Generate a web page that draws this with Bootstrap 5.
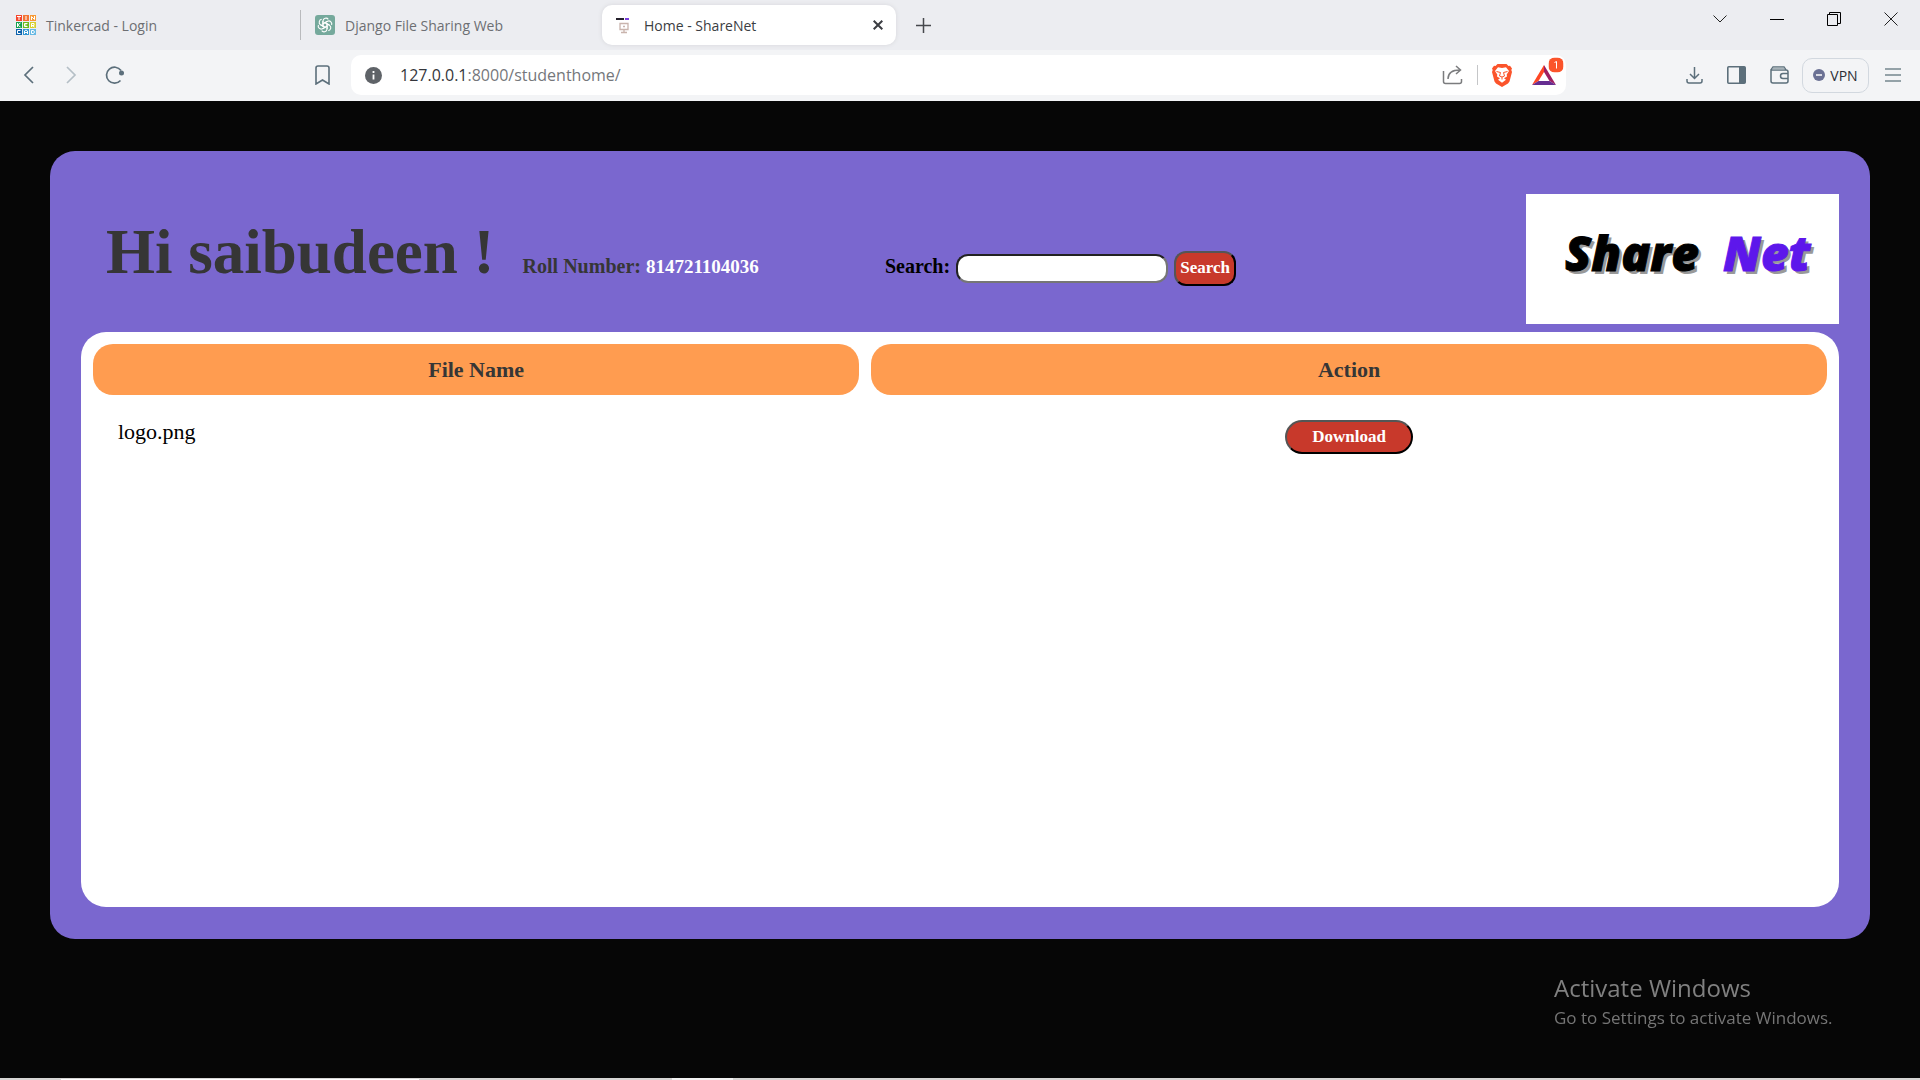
<!DOCTYPE html>
<html lang="en">
<head>
<meta charset="utf-8">
<meta name="viewport" content="width=device-width, initial-scale=1">
<title>Home - ShareNet</title>
<link href="https://cdn.jsdelivr.net/npm/bootstrap@5.3.0/dist/css/bootstrap.min.css" rel="stylesheet">
<style>
  body { font-family: "Open Sans", "Noto Sans", sans-serif; background: #060606; }
  button { border: 0; background: transparent; padding: 0; }
  svg { display: block; flex: none; }
  .tab-strip { height: 50px; background: #ecedf1; font-size: 14px; color: #6d6f73; }
  .tab-item { width: 301px; height: 30px; color: inherit; text-decoration: none; gap: 10px; }
  .tab-item.first { padding-left: 16px; border-right: 1px solid #b9babd; }
  .tab-item.second { padding-left: 14px; }
  .tab-item.current { width: 294px; height: 40px; background: #fff; border-radius: 10px; color: #3b3d42; padding: 0 13px; gap: 11px; box-shadow: 0 0 4px #d5d6da; }
  .new-tab { margin-left: 20px; }
  .window-controls { gap: 43px; padding: 0 22px 13px 0; }
  .toolbar { height: 51px; background: #f3f4f6; padding: 0 19px 1px 21px; }
  .nav-buttons { width: 294px; gap: 26px; }
  .address { height: 40px; flex: 1; border-radius: 10px; background: #fff; padding: 0 10px 0 14px; margin-left: 21px; }
  .url { font-size: 16px; color: #75777b; margin-left: 18px; }
  .url span { color: #34363b; }
  .address-divider { width: 1px; height: 20px; background: #c5c6c8; margin: 0 14px; }
  .tools { margin-left: 120px; }
  .vpn { height: 35px; width: 67px; border: 1px solid #d2d8df; border-radius: 10px; font-size: 14px; color: #2c2e35; gap: 5px; margin-left: 13px; }
  .share-panel { margin: 50px 50px 139px; padding: 43px 31px 32px; background: #7a67cf; border-radius: 25px; font-family: "Liberation Serif", serif; }
  .panel-head { margin-bottom: 8px; padding-left: 25px; }
  .intro { padding-top: 27px; color: #363636; font-weight: 700; }
  .greeting { font-size: 63px; line-height: 63px; font-weight: 700; margin: 0; }
  .roll { font-size: 20px; margin: 0 0 0 28px; }
  .roll span { font-size: 19px; color: #fff; }
  .search-form { margin-left: 126px; color: #000; font-size: 20px; gap: 6px; }
  .search-form input { width: 212px; height: 29px; border: 2px solid; border-color: #222 #767676 #767676 #222; border-radius: 12px; background: #fff; padding: 0 8px; font-size: 16px; }
  .red-btn { background: #c8392b; color: #fff; font-weight: 700; font-size: 17px; line-height: 22px; border: 2px solid; border-color: #555 #000 #000 #555; }
  .search-btn { width: 62px; height: 35px; border-radius: 12px; }
  .download-btn { width: 128px; height: 34px; border-radius: 17px; }
  .brand { width: 313px; height: 130px; background: #fff; }
  .brand text { font-family: "Open Sans", sans-serif; font-weight: 800; font-style: italic; font-size: 48px; }
  .files { background: #fff; border-radius: 25px; font-size: 22px; color: #000; }
  .files table { width: 100%; border-collapse: separate; border-spacing: 12px; table-layout: fixed; }
  .files th { height: 51px; background: #ff9c50; border-radius: 20px; color: #363636; text-align: center; line-height: 33px; padding: 0; }
  .files td { padding: 13px 25px; vertical-align: top; line-height: 24px; }
  .files .name-col { width: 44.5%; }
  .activate { position: fixed; right: 81px; bottom: 49px; width: 285px; color: #757575; pointer-events: none; white-space: nowrap; }
  .activate strong { font-weight: 400; font-size: 24px; line-height: 34px; color: #808080; }
  .activate span { font-size: 17px; line-height: 26px; }
  .taskbar { height: 2px; background: #d6d5d4; }
  .taskbar div { height: 1px; margin: 1px 0 0 61px; width: 358px; background: #fff; }
  .taskbar span { height: 2px; width: 61px; margin-left: 253px; background: #f2f2f2; }
</style>
</head>
<body>
<div class="d-flex flex-column min-vh-100">
  <header>
    <div class="tab-strip d-flex justify-content-between align-items-center">
      <nav class="d-flex align-items-center" aria-label="Tabs">
        <a href="#" class="tab-item first d-flex align-items-center">
          <svg width="20" height="20" viewBox="0 0 20 20">
            <path fill="#f5462d" d="M0 0h6v6H0z"/><path fill="#f37435" d="M7 0h6v6H7z"/><path fill="#f79a36" d="M14 0h6v6h-6z"/>
            <path fill="#13a04b" d="M0 7h6v6H0z"/><path fill="#6cbb1c" d="M7 7h6v6H7z"/><path fill="#d6cf2c" d="M14 7h6v6h-6z"/>
            <path fill="#0d63ad" d="M0 14h6v6H0z"/><path fill="#3094d1" d="M7 14h6v6H7z"/><path fill="#67b9e4" d="M14 14h6v6h-6z"/>
            <path fill="none" stroke="#fff" d="M1 1.500h4M3 1v4M10 1v4M15.500 5V1.500l3 3V1M1.500 8v4m3-4-3 2 3 2M11.500 8.500h-3v3h3m-3-1.500h2M15.500 12V8.500h2.500v2h-2l2.500 1.500M4.500 15.500h-3v3h3M8.500 19v-3l1.500-1 1.500 1v3m-3-1.500h3M15.500 15.500v3h2l1-1.500-1-1.500z"/>
          </svg>Tinkercad - Login</a>
        <a href="#" class="tab-item second d-flex align-items-center">
          <svg width="20" height="20" viewBox="0 0 20 20"><rect width="20" height="20" rx="3" fill="#75a99c"/>
            <g fill="none" stroke="#fff" stroke-width="1.100"><path id="k" d="M8 11.200V5.800a3 3 0 0 1 5.300-1.500M10 7.600l4.600 2.600"/><use href="#k" transform="rotate(60 10 10)"/><use href="#k" transform="rotate(120 10 10)"/><use href="#k" transform="rotate(180 10 10)"/><use href="#k" transform="rotate(240 10 10)"/><use href="#k" transform="rotate(300 10 10)"/></g></svg>Django File Sharing Web</a>
        <a href="#" class="tab-item current d-flex align-items-center" aria-current="page">
          <svg width="18" height="18" viewBox="0 0 18 18"><path d="M1 3h8" stroke="#24202b" stroke-width="2"/><path d="M10 3h4" stroke="#7a40dd" stroke-width="2"/><path d="M5 7.500h8v6H5zM9 14v2M6 16.500h6M8 10.500h2" fill="none" stroke="#c9b4ad" stroke-width="1.300"/></svg>
          <span class="flex-grow-1">Home - ShareNet</span>
          <svg width="10" height="10" viewBox="0 0 10 10"><path d="m.7.7 8.600 8.600m0-8.600L.7 9.300" stroke="#3b3d42" stroke-width="2"/></svg></a>
        <button type="button" class="new-tab" aria-label="New tab"><svg width="15" height="15" viewBox="0 0 15 15"><path d="M7.500 0v15M0 7.500h15" stroke="#46484d" stroke-width="1.500"/></svg></button>
      </nav>
      <div class="window-controls d-flex align-items-center">
        <button type="button" aria-label="Search tabs"><svg width="14" height="14" viewBox="0 0 14 14"><path d="m.5 3.500 6.500 6.500 6.500-6.500" fill="none" stroke="#222"/></svg></button>
        <button type="button" aria-label="Minimize"><svg width="14" height="14" viewBox="0 0 14 14"><path d="M0 7.500h14" stroke="#000"/></svg></button>
        <button type="button" aria-label="Restore"><svg width="14" height="14" viewBox="0 0 14 14"><path d="M.5 2.500h10v11H.5zM2.500 2.500v-2h11v11h-3" fill="none" stroke="#000"/></svg></button>
        <button type="button" aria-label="Close"><svg width="14" height="14" viewBox="0 0 14 14"><path d="m.5.5 13 13m0-13-13 13" stroke="#222"/></svg></button>
      </div>
    </div>
    <div class="toolbar d-flex align-items-center">
      <div class="nav-buttons d-flex align-items-center">
        <button type="button" aria-label="Back"><svg width="16" height="20" viewBox="0 0 16 20"><path d="m12 2-8 8 8 8" fill="none" stroke="#5c6f7b" stroke-width="1.700"/></svg></button>
        <button type="button" aria-label="Forward"><svg width="16" height="20" viewBox="0 0 16 20"><path d="m4 2 8 8-8 8" fill="none" stroke="#b5bfc6" stroke-width="1.700"/></svg></button>
        <button type="button" aria-label="Reload"><svg width="20" height="20" viewBox="0 0 20 20"><path d="M15.500 15.500a8 8 0 1 1 .5-10" fill="none" stroke="#5c6f7b" stroke-width="1.700"/><circle cx="16.500" cy="8" r="2.500" fill="#5c6f7b"/></svg></button>
      </div>
      <button type="button" aria-label="Bookmark"><svg width="15" height="20" viewBox="0 0 15 20"><path d="M1 3a2 2 0 0 1 2-2h9a2 2 0 0 1 2 2v16l-6.500-4L1 19z" fill="none" stroke="#5c6f7b" stroke-width="1.600"/></svg></button>
      <div class="address d-flex align-items-center">
        <svg width="17" height="17" viewBox="0 0 17 17"><circle cx="8.500" cy="8.500" r="8.500" fill="#5f6368"/><path d="M8.500 7.500v5M8.500 4v2" stroke="#fff" stroke-width="1.800"/></svg>
        <div class="url flex-grow-1"><span>127.0.0.1</span>:8000/studenthome/</div>
        <button type="button" aria-label="Share"><svg width="21" height="20" viewBox="0 0 21 20"><path d="M1.500 6v10.500a2 2 0 0 0 2 2h14a2 2 0 0 0 2-2V14M6 14c0-6 4-9 12-9M14 1l4.500 4L14 9" fill="none" stroke="#7b7c7e" stroke-width="1.500"/></svg></button>
        <div class="address-divider"></div>
        <svg width="20" height="23" viewBox="0 0 20 23"><path fill="#fb542b" d="m5.500 0h9l2 2 1.500-.3 2 2.800-.7 1.500.7 2-2.500 9.500-1.500 2L10 23l-6-3.500-1.500-2L0 8l.7-2L0 4.500l2-2.800 1.500.3z"/><path fill="#fff" d="m10 4 4-.8L17 7l-2.300 3.500.3 2-3 1.700 2 1.500-4 3-4-3 2-1.500-3-1.700.3-2L3 7l3-3.800z"/><path stroke="#fb542b" fill="none" d="m4.500 7.500 4 1-1 3.500 2.500 1 2.500-1-1-3.500 4-1M10 13v2.500"/></svg>
        <span class="position-relative ms-3"><svg class="ms-1" width="24" height="20" viewBox="0 0 24 20"><path fill="#ff4724" d="M12 0v7L6.500 16 0 20z"/><path fill="#9e1f63" d="m12 0 12 20-6.500-4L12 7z"/><path fill="#662d91" d="m0 20 6.500-4h11l6.500 4z"/></svg>
          <svg class="position-absolute top-0 start-100 translate-middle" width="15" height="15" viewBox="0 0 15 15"><rect width="15" height="15" rx="6" fill="#fb542b"/><path d="m6 5 2-1v7" stroke="#fff" fill="none"/></svg></span>
      </div>
      <div class="tools d-flex align-items-center">
        <button type="button" aria-label="Downloads"><svg width="17" height="17" viewBox="0 0 17 17"><path d="M8.500 0v11M4 7l4.500 4.500L13 7M1 12v2a2 2 0 0 0 2 2h11a2 2 0 0 0 2-2v-2" fill="none" stroke="#5c6f7b" stroke-width="1.500"/></svg></button>
        <button type="button" class="ms-4" aria-label="Sidebar"><svg width="19" height="18" viewBox="0 0 19 18"><rect x=".8" y=".8" width="17.400" height="16.400" rx="1" fill="none" stroke="#5c6f7b" stroke-width="1.600"/><path fill="#5c6f7b" d="M12 1h6v16h-6z"/></svg></button>
        <button type="button" class="ms-4" aria-label="Wallet"><svg width="19" height="18" viewBox="0 0 19 18"><path d="M1 4v11a2 2 0 0 0 2 2h13a2 2 0 0 0 2-2V6a2 2 0 0 0-2-2H1zm0 0 2-3h11l2 3m2 3.500h-5a2.500 2.500 0 0 0 0 5h5" fill="none" stroke="#5c6f7b" stroke-width="1.500"/><path fill="#a8b3ba" d="M3 1.500h11l1 2H2z"/></svg></button>
        <button type="button" class="vpn d-flex align-items-center justify-content-center"><svg width="12" height="12" viewBox="0 0 12 12"><circle cx="6" cy="6" r="6" fill="#6b7194"/><path d="M3 6h6" stroke="#fff" stroke-width="1.500"/></svg>VPN</button>
        <button type="button" class="ms-3" aria-label="Menu"><svg width="16" height="14" viewBox="0 0 16 14"><path d="M0 1h16M0 7h16M0 13h16" stroke="#76868f" stroke-width="1.500"/></svg></button>
      </div>
    </div>
  </header>

  <main class="share-panel d-flex flex-column flex-grow-1">
    <div class="panel-head d-flex justify-content-between">
      <div class="intro d-flex align-items-baseline">
        <h1 class="greeting">Hi saibudeen !</h1>
        <p class="roll">Roll Number: <span>814721104036</span></p>
        <form class="search-form d-flex align-items-baseline">
          <label for="file-search">Search:</label>
          <input type="text" id="file-search">
          <button type="submit" class="red-btn search-btn">Search</button>
        </form>
      </div>
      <div class="brand">
        <svg width="313" height="130" viewBox="0 0 313 130" role="img" aria-label="Share Net">
          <g fill="#999"><text x="42" y="80">Share</text><text x="200" y="80">Net</text></g>
          <text x="39" y="77" stroke="#000" stroke-width="1">Share</text><text x="197" y="77" fill="#5d17eb" stroke="#5d17eb" stroke-width="1">Net</text>
        </svg>
      </div>
    </div>
    <section class="files flex-grow-1">
      <table>
        <thead><tr><th class="name-col" scope="col">File Name</th><th scope="col">Action</th></tr></thead>
        <tbody><tr><td>logo.png</td><td class="text-center"><button type="button" class="red-btn download-btn">Download</button></td></tr></tbody>
      </table>
    </section>
  </main>
  <footer class="taskbar d-flex"><div></div><span></span></footer>
</div>
<div class="activate d-flex flex-column"><strong>Activate Windows</strong><span>Go to Settings to activate Windows.</span></div>
<script src="https://cdn.jsdelivr.net/npm/bootstrap@5.3.0/dist/js/bootstrap.bundle.min.js"></script>
</body>
</html>
